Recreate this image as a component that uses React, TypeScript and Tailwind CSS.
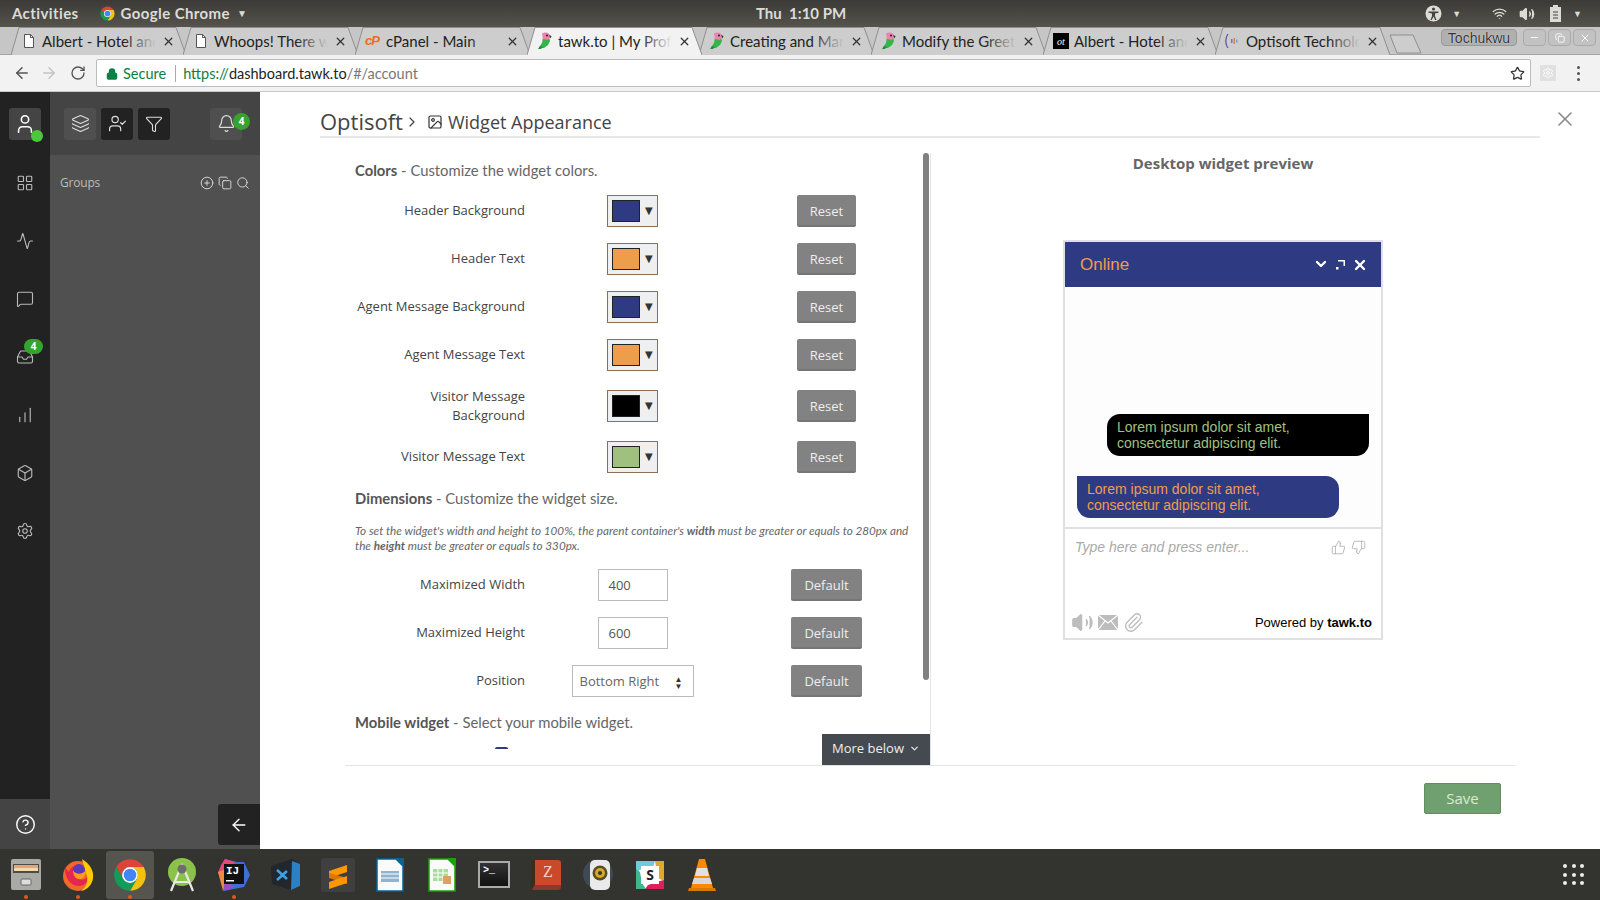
import {
  Activity,
  ArrowLeft,
  ArrowRight,
  Bell,
  Box,
  ChartNoAxesColumnIncreasing,
  ChevronDown,
  ChevronRight,
  CircleHelp,
  CirclePlus,
  Copy,
  Funnel,
  Image,
  Inbox,
  Layers,
  LayoutGrid,
  Lock,
  MessageSquare,
  Minus,
  Paperclip,
  RotateCw,
  Search,
  Settings,
  Star,
  ThumbsDown,
  ThumbsUp,
  User,
  UserCheck,
  Volume2,
  Wifi,
  X,
} from "lucide-react";

function ChromeLogo({ size }: { size: number }) {
  return (
    <svg width={size} height={size} viewBox="0 0 48 48">
      <path d="M24 4a20 20 0 0 1 17.32 10H24a10 10 0 0 0-8.66 15L6.68 14A20 20 0 0 1 24 4z" fill="#db4437" />
      <path d="M41.32 14A20 20 0 0 1 24 44l8.66-15A10 10 0 0 0 24 14z" fill="#f4c20d" />
      <path d="M6.68 14l8.66 15a10 10 0 0 0 17.32 0L24 44A20 20 0 0 1 6.68 14z" fill="#0f9d58" />
      <circle cx="24" cy="24" r="10" fill="#fff" />
      <circle cx="24" cy="24" r="8" fill="#4285f4" />
    </svg>
  );
}

function Parrot() {
  return (
    <svg width="16" height="18" viewBox="0 0 16 18">
      <path d="M6 5h6l1 4-2 4-4 3H2l1-2 2-3z" fill="#35b44a" />
      <path d="M5 1.500C7 0 11 0 12.500 2.500L14 6l-2 0-1 2-5-1z" fill="#f27fb2" />
      <circle cx="10" cy="3.500" r="1" fill="#222" />
      <path d="M3 14l-2 3h3l2-2z" fill="#1f8f3a" />
      <path d="M12 3l2.500 1-1 2.500z" fill="#333" />
    </svg>
  );
}

function PageIcon() {
  return (
    <svg width="16" height="16" viewBox="0 0 16 16" fill="#fff" stroke="#555">
      <path d="M3.500 1.500h6l3 3v10h-9z" />
      <path d="M9.500 1.500v3h3" fill="none" />
    </svg>
  );
}

function CpanelIcon() {
  return <span className="w-4 font-['Liberation_Sans',sans-serif] text-[13px] font-bold italic leading-4 tracking-[-1px] text-[#ee6c21]">cP</span>;
}

function AlbertIcon() {
  return <span className="flex h-4 w-4 items-center justify-center bg-black font-['Liberation_Serif',serif] text-[10px] italic text-white">ot</span>;
}

function OptisoftIcon() {
  return (
    <svg width="16" height="16" viewBox="0 0 16 16">
      <path d="M3 1C0 5 0 11 3 15" fill="none" stroke="#5b4ba8" strokeWidth="1.200" />
      <rect x="6" y="6" width="1.500" height="4" fill="#7d6bc0" />
      <rect x="8.500" y="5" width="1.500" height="6" fill="#d9824a" />
      <rect x="11" y="6.500" width="1.500" height="3" fill="#7da0c0" />
    </svg>
  );
}

const tabs = [
  { id: 1, title: "Albert - Hotel and", icon: <PageIcon /> },
  { id: 2, title: "Whoops! There was", icon: <PageIcon /> },
  { id: 3, title: "cPanel - Main", icon: <CpanelIcon /> },
  { id: 4, title: "tawk.to | My Profile", icon: <Parrot />, active: true },
  { id: 5, title: "Creating and Manag", icon: <Parrot /> },
  { id: 6, title: "Modify the Greeting", icon: <Parrot /> },
  { id: 7, title: "Albert - Hotel and", icon: <AlbertIcon /> },
  { id: 8, title: "Optisoft Technolog", icon: <OptisoftIcon /> },
];

function Tab({ title, icon, active }: { title: string; icon: React.ReactNode; active?: boolean }) {
  return (
    <div className={`relative -mr-[3px] flex h-[28px] w-[175px] shrink-0 items-center pl-[10px] ${active ? "z-10" : ""}`}>
      <svg className="absolute inset-0" width="175" height="28" viewBox="0 0 175 28">
        <path d="M0 28L8 .5H165L175 28" fill={active ? "#f2f2f2" : "#cdcdcd"} stroke="#8f8f8f" />
      </svg>
      <span className="relative flex w-4 justify-center">{icon}</span>
      <span className="relative ml-[5px] w-[114px] overflow-hidden whitespace-nowrap text-[15px] text-[#222]">
        {title}
        <span className={`absolute inset-y-0 right-0 w-8 bg-gradient-to-r from-transparent ${active ? "to-[#f2f2f2]" : "to-[#cdcdcd]"}`} />
      </span>
      <X className="relative ml-[6px] text-[#333]" size={13} strokeWidth={2.4} />
    </div>
  );
}

function TopBar() {
  return (
    <div className="relative flex h-[27px] items-center bg-gradient-to-b from-[#3b3a36] to-[#55534c] pl-3 pr-[18px] font-['Lato',sans-serif] text-[15px] font-bold text-[#dcdcd6]">
      <span className="tracking-[0.4px]">Activities</span>
      <span className="ml-[20px]">
        <ChromeLogo size={17} />
      </span>
      <span className="ml-[5px] tracking-[0.4px]">Google Chrome</span>
      <span className="ml-[7px] text-[10px]">▼</span>
      <span className="absolute left-[756px]">Thu&nbsp;&nbsp;1:10 PM</span>
      <div className="ml-auto flex items-center text-[#dcdcd6]">
        <svg width="17" height="17" viewBox="0 0 17 17">
          <circle cx="8.500" cy="8.500" r="8" fill="#dcdcd6" />
          <circle cx="8.500" cy="4" r="1.600" fill="#45443f" />
          <path d="M3.500 6.500h10v1.200l-3.500.8v2.500l1.500 4h-1.300l-1.700-3.500-1.700 3.500H5.500l1.500-4V8.500l-3.500-.8z" fill="#45443f" />
        </svg>
        <span className="ml-[10px] text-[9px]">▼</span>
        <Wifi size={15} className="ml-[31px]" />
        <Volume2 size={16} className="ml-[12px]" fill="#dcdcd6" />
        <svg className="ml-[14px]" width="14" height="17" viewBox="0 0 14 17">
          <path d="M4 0h5v2h3v15H1V2h3z" fill="#dcdcd6" />
          <path d="M4 7h5M4 10h5M4 13h5" stroke="#45443f" />
        </svg>
        <span className="ml-[10px] text-[9px]">▼</span>
      </div>
    </div>
  );
}

function WindowButton({ children }: { children: React.ReactNode }) {
  return <span className="flex h-[17px] w-[23px] items-center justify-center rounded-sm border border-[#aaa] bg-[#c2c2c2] text-white">{children}</span>;
}

function TabStrip() {
  return (
    <div className="flex h-[28px] items-start border-b border-[#a2a2a2] bg-[#c6c6c6] pl-[11px] font-['Lato',sans-serif]">
      {tabs.map((t) => (
        <Tab key={t.id} title={t.title} icon={t.icon} active={t.active} />
      ))}
      <svg className="mt-[7px] ml-[2px] shrink-0" width="34" height="20" viewBox="0 0 34 20">
        <path d="M1 1H24L32 19H8z" fill="#cdcdcd" stroke="#8f8f8f" />
      </svg>
      <div className="ml-auto mt-[2px] flex gap-[2px] pr-[4px]">
        <span className="mr-[4px] flex h-[17px] w-[76px] items-center justify-center rounded-sm border border-[#999] bg-[#b0b0b0] font-['Liberation_Sans',sans-serif] text-[14px] leading-none text-[#333] [text-shadow:0_0_1px_#fff]">
          Tochukwu
        </span>
        <WindowButton>
          <Minus size={11} strokeWidth={2} />
        </WindowButton>
        <WindowButton>
          <Copy size={10} strokeWidth={2} />
        </WindowButton>
        <WindowButton>
          <X size={12} strokeWidth={2} />
        </WindowButton>
      </div>
    </div>
  );
}

function Toolbar() {
  return (
    <div className="flex h-[37px] items-center border-b border-[#c8c8c8] bg-[#f2f2f2] pl-[13px] font-['Lato',sans-serif] text-[14.5px]">
      <ArrowLeft size={18} className="text-[#555]" />
      <ArrowRight size={18} className="ml-[9px] text-[#c4c4c4]" />
      <RotateCw size={16} className="ml-[12px] text-[#555]" />
      <div className="ml-[10px] flex h-[28px] w-[1435px] items-center rounded-[2px] border border-[#bcbcbc] bg-white pl-[9px] pr-[5px] pt-[1px]">
        <Lock size={12} strokeWidth={3} className="text-[#0b8043]" fill="#0b8043" />
        <span className="ml-[5px] text-[#0b8043]">Secure</span>
        <span className="ml-[9px] h-[17px] w-px bg-[#aaa]" />
        <span className="ml-[7px] text-[#0b8043]">https://</span>
        <span className="text-[#222]">dashboard.tawk.to</span>
        <span className="text-[#777]">/#/account</span>
        <Star size={15} className="ml-auto text-[#333]" />
      </div>
      <span className="ml-[9px] flex h-[16px] w-[16px] items-center justify-center bg-[#e0e0e0] text-[#fff]">
        <Settings size={12} />
      </span>
      <span className="ml-[21px] flex flex-col gap-[3px]">
        <span className="h-[3px] w-[3px] rounded-full bg-[#555]" />
        <span className="h-[3px] w-[3px] rounded-full bg-[#555]" />
        <span className="h-[3px] w-[3px] rounded-full bg-[#555]" />
      </span>
    </div>
  );
}

const railIcons = [LayoutGrid, Activity, MessageSquare, Inbox, ChartNoAxesColumnIncreasing, Box, Settings];

function Rail() {
  return (
    <div className="flex w-[50px] shrink-0 flex-col items-center bg-[#222] text-[#b9b9b9]">
      <div className="relative mt-[16px] flex h-8 w-8 items-center justify-center rounded-[3px] bg-[#444] text-white">
        <User size={22} strokeWidth={1.7} />
        <span className="absolute -bottom-[2px] -right-[2px] h-3 w-3 rounded-full bg-[#4cc83c]" />
      </div>
      <div className="mt-[14px] flex w-full flex-col">
        {railIcons.map((Icon, i) => (
          <div key={i} className="relative flex h-[58px] items-center justify-center">
            <Icon size={18} strokeWidth={1.5} />
            {i === 3 && (
              <span className="absolute left-[24px] top-[11px] flex h-[15px] w-[19px] items-center justify-center rounded-full bg-[#36a32e] text-[10px] font-bold text-white">
                4
              </span>
            )}
          </div>
        ))}
      </div>
      <div className="mt-auto flex h-[50px] w-full items-center justify-center bg-[#444] text-white">
        <CircleHelp size={21} strokeWidth={1.6} />
      </div>
    </div>
  );
}

function SidePanel() {
  return (
    <div className="flex w-[210px] shrink-0 flex-col bg-[#505050] text-[#ddd]">
      <div className="flex h-[63px] items-center bg-[#444] pl-[14px]">
        <span className="flex h-8 w-8 items-center justify-center rounded-[3px] bg-[#4f4f4f]">
          <Layers size={19} strokeWidth={1.4} />
        </span>
        <span className="ml-[5px] flex h-8 w-8 items-center justify-center rounded-[3px] bg-[#222]">
          <UserCheck size={19} strokeWidth={1.5} />
        </span>
        <span className="ml-[5px] flex h-8 w-8 items-center justify-center rounded-[3px] bg-[#222]">
          <Funnel size={18} strokeWidth={1.5} />
        </span>
        <span className="relative ml-[40px] flex h-8 w-8 items-center justify-center rounded-[3px] bg-[#4f4f4f]">
          <Bell size={19} strokeWidth={1.5} />
          <span className="absolute -right-[8px] top-[5px] flex h-[17px] w-[17px] items-center justify-center rounded-full bg-[#36a32e] text-[10px] font-bold text-white">
            4
          </span>
        </span>
      </div>
      <div className="mt-[19px] flex items-center pl-[10px] pr-[10px] text-[12px] tracking-[-0.2px] text-[#bbb]">
        <span>Groups</span>
        <span className="ml-auto flex items-center gap-[4px] text-[#e4e4e4]">
          <CirclePlus size={14} strokeWidth={1.5} />
          <Copy size={14} strokeWidth={1.5} />
          <Search size={14} strokeWidth={1.5} />
        </span>
      </div>
      <div className="mt-auto mb-[4px] ml-auto flex h-[41px] w-[42px] items-center justify-center rounded-l-[3px] bg-[#222] text-white">
        <ArrowLeft size={20} strokeWidth={1.6} />
      </div>
    </div>
  );
}

function Swatch({ color }: { color: string }) {
  return (
    <div className="flex h-8 w-[51px] items-center border border-[#8d6e56] bg-[#efefef] pl-[4px]">
      <span className={`h-[22px] w-[28px] border border-[#222] ${color}`} />
      <span className="ml-[5px] -mt-[2px] font-['DejaVu_Sans',sans-serif] text-[10px] text-[#333]">▼</span>
    </div>
  );
}

function FormButton({ label, wide }: { label: string; wide?: boolean }) {
  return (
    <button className={`h-8 rounded-[2px] border-b-2 border-[#767676] bg-[#828282] pt-[3px] text-[13px] text-[#eee] ${wide ? "w-[71px]" : "w-[59px]"}`}>
      {label}
    </button>
  );
}

function Row({ label, control, button, tall }: { label: React.ReactNode; control: React.ReactNode; button: React.ReactNode; tall?: boolean }) {
  return (
    <div className={`grid grid-cols-[170px_215px_173px] items-center justify-items-center ${tall ? "h-[38px]" : "h-8"}`}>
      <div className={`justify-self-end text-right text-[13px] leading-[19px] text-[#444] ${tall ? "" : "-mt-[2px]"}`}>{label}</div>
      {control}
      {button}
    </div>
  );
}

const colorRows = [
  { label: "Header Background", color: "bg-[#2e3a82]" },
  { label: "Header Text", color: "bg-[#ee9e4a]" },
  { label: "Agent Message Background", color: "bg-[#2e3a82]" },
  { label: "Agent Message Text", color: "bg-[#ee9e4a]" },
  { label: <>Visitor Message<br />Background</>, color: "bg-black", tall: true },
  { label: "Visitor Message Text", color: "bg-[#a0c080]" },
];

function Heading({ bold, rest }: { bold: string; rest: string }) {
  return (
    <h3 className="font-['Lato',sans-serif] text-[14.8px] leading-5 text-[#666]">
      <b className="text-[#555]">{bold}</b> - {rest}
    </h3>
  );
}

function SettingsPane() {
  return (
    <div className="relative mt-[15px] w-[586px] shrink-0 overflow-hidden border-r border-[#e4e4e4] pl-[10px]">
      <div className="pt-[7px]">
        <Heading bold="Colors" rest="Customize the widget colors." />
        <div className="mt-[15px] flex flex-col gap-4">
          {colorRows.map((r, i) => (
            <Row key={i} label={r.label} tall={r.tall} control={<Swatch color={r.color} />} button={<FormButton label="Reset" />} />
          ))}
        </div>
        <div className="mt-[15px]">
          <Heading bold="Dimensions" rest="Customize the widget size." />
        </div>
        <p className="mt-[15px] w-[560px] font-['Lato',sans-serif] text-[11.7px] italic leading-[15px] text-[#666]">
          To set the widget's width and height to 100%, the parent container's <b>width</b> must be greater or equals to 280px and the <b>height</b> must be greater or equals to 330px.
        </p>
        <div className="mt-[16px] flex flex-col gap-4">
          <Row
            label="Maximized Width"
            control={<span className="flex h-8 w-[70px] items-center border border-[#bbb] pl-[10px] pt-[1px] text-[13px] text-[#555]">400</span>}
            button={<FormButton label="Default" wide />}
          />
          <Row
            label="Maximized Height"
            control={<span className="flex h-8 w-[70px] items-center border border-[#bbb] pl-[10px] pt-[1px] text-[13px] text-[#555]">600</span>}
            button={<FormButton label="Default" wide />}
          />
          <Row
            label="Position"
            control={
              <span className="flex h-8 w-[122px] items-center justify-between border border-[#bbb] pl-[7px] pr-[10px] pt-[1px] text-[13px] text-[#666]">
                Bottom Right
                <span className="flex flex-col text-[8px] leading-[7px] text-[#333]">
                  <span>▲</span>
                  <span>▼</span>
                </span>
              </span>
            }
            button={<FormButton label="Default" wide />}
          />
        </div>
        <div className="mt-[15px]">
          <Heading bold="Mobile widget" rest="Select your mobile widget." />
        </div>
        <div className="ml-[140px] mt-[15px] h-[2px] w-[13px] rounded-t-full bg-[#2e3a82]" />
      </div>
      <div className="absolute right-[1px] top-0 h-[527px] w-[6px] rounded-[3px] bg-[#808080]" />
      <div className="absolute bottom-0 right-0 flex h-[31px] w-[108px] items-center justify-center gap-[5px] bg-[#454a50] pb-[2px] text-[13px] text-[#eee]">
        More below
        <ChevronDown size={11} strokeWidth={2.5} />
      </div>
    </div>
  );
}

function WidgetPreview() {
  return (
    <div className="flex-1 pt-[15px]">
      <h3 className="text-center text-[15px] font-bold leading-5 text-[#666]">Desktop widget preview</h3>
      <div className="mx-auto mt-[67px] flex h-[400px] w-[320px] flex-col border-2 border-[#e0e0e0] font-['Liberation_Sans',sans-serif]">
        <div className="flex h-[45px] items-center bg-[#2e3a82] pl-[15px] pr-[13px] text-[17px] text-[#ee9e4a]">
          Online
          <span className="ml-auto flex items-center text-white">
            <ChevronDown size={16} strokeWidth={3.5} className="-mt-[2px]" />
            <svg className="ml-[6px]" width="11" height="11" viewBox="0 0 11 11" fill="#fff">
              <path d="M3 1h7v6H8.500V2.500H3z" />
              <rect x="1" y="8" width="2.500" height="2.500" />
            </svg>
            <X size={16} strokeWidth={3.5} className="ml-[6px]" />
          </span>
        </div>
        <div className="flex h-[240px] flex-col justify-end gap-5 bg-[#fdfdfd] pb-[9px]">
          <div className="ml-[42px] h-[42px] w-[262px] rounded-[13px] rounded-tr-none bg-black px-[10px] py-[5px] text-[14px] leading-4 text-[#a0c080]">
            Lorem ipsum dolor sit amet, consectetur adipiscing elit.
          </div>
          <div className="ml-[12px] h-[42px] w-[262px] rounded-[13px] rounded-tl-none bg-[#2e3a82] px-[10px] py-[5px] text-[14px] leading-4 text-[#ee9e4a]">
            Lorem ipsum dolor sit amet, consectetur adipiscing elit.
          </div>
        </div>
        <div className="flex flex-1 flex-col border-t-2 border-[#e0e0e0] pb-[4px] pl-[6px] pr-[9px]">
          <div className="mt-[8px] flex items-center pl-[4px] pr-[6px] text-[14px] italic text-[#aaa]">
            Type here and press enter...
            <ThumbsUp size={15} strokeWidth={1.3} className="ml-auto" />
            <ThumbsDown size={15} strokeWidth={1.3} className="ml-[5px]" />
          </div>
          <div className="mt-auto flex items-center text-[13px] text-black">
            <Volume2 size={23} className="text-[#bdbdbd]" fill="#bdbdbd" strokeWidth={1.5} />
            <svg className="ml-[4px]" width="20" height="15" viewBox="0 0 20 15">
              <rect width="20" height="15" fill="#bdbdbd" />
              <path d="M0 0l10 8 10-8M0 15l7-9M20 15l-7-9" fill="none" stroke="#fff" strokeWidth="1.200" />
            </svg>
            <Paperclip size={21} className="ml-[5px] text-[#bdbdbd]" strokeWidth={1.5} />
            <span className="ml-auto">
              Powered by <b>tawk.to</b>
            </span>
          </div>
        </div>
      </div>
    </div>
  );
}

function MainPanel() {
  return (
    <div className="flex flex-1 flex-col bg-white">
      <div className="flex h-[46px] items-start pl-[60px]">
        <div className="flex h-[46px] w-[1220px] items-center border-b-2 border-[#e8e8e8] pt-[14px] text-[#444]">
          <span className="text-[22px]">Optisoft</span>
          <ChevronRight size={16} strokeWidth={1.8} className="ml-px mt-[2px]" />
          <Image size={16} strokeWidth={1.8} className="ml-[7px] mt-[2px] text-[#333]" />
          <span className="ml-[5px] mt-[2px] text-[18px]">Widget Appearance</span>
        </div>
        <X size={24} strokeWidth={1.6} className="ml-[13px] mt-[15px] text-[#888]" />
      </div>
      <div className="ml-[85px] flex h-[628px] w-[1170px] border-b border-[#e4e4e4]">
        <SettingsPane />
        <WidgetPreview />
      </div>
      <div className="flex justify-end pr-[99px] pt-[17px]">
        <button className="h-[31px] w-[77px] rounded-[2px] border border-[#5f8f5f] bg-[#70a070] text-[15px] text-[#d8ecd0]">Save</button>
      </div>
    </div>
  );
}

function FilesIcon() {
  return (
    <svg width="30" height="31" viewBox="0 0 30 31">
      <rect x="0" y="0" width="30" height="31" rx="2" fill="#a9a9a6" />
      <rect x="2" y="5" width="26" height="9" fill="#4e4b45" />
      <rect x="3" y="6" width="24" height="3" fill="#e9a37a" />
      <rect x="3" y="9" width="24" height="3" fill="#f3d8b0" />
      <rect x="10" y="20" width="10" height="6" rx="1" fill="#ddd" stroke="#666" />
    </svg>
  );
}

function FirefoxIcon() {
  return (
    <svg width="32" height="34" viewBox="0 0 32 34">
      <circle cx="16" cy="18" r="15" fill="#f2672a" />
      <path d="M20 1c8 5 12 12 11 19-1 7-6 12-12 13 6-4 8-11 5-18-1-5-3-9-4-14z" fill="#ffcb00" />
      <path d="M3 10c0 8 4 18 14 18 6 0 9-4 8-9-2 3-5 3-8 2-3-1-4-3-3-5 3 0 5-1 5-3-2-2-3-4-1-7-6 1-10 4-11 8-1-1-2-2-4-4z" fill="#e22850" />
      <circle cx="17" cy="12" r="6" fill="#5b3ab8" />
      <path d="M11 12c2 5 10 5 13 0 0 6-3 10-8 9-3-1-5-4-5-9z" fill="#ff9a1f" />
    </svg>
  );
}

function AndroidIcon() {
  return (
    <svg width="30" height="34" viewBox="0 0 30 34">
      <circle cx="15" cy="14" r="14" fill="#8bc34a" />
      <path d="M15 6L4 33M15 6l11 27M8 24h14" stroke="#e8e8e8" strokeWidth="2.200" fill="none" />
      <circle cx="15" cy="11" r="4.500" fill="#6d6d6d" />
    </svg>
  );
}

function IntellijIcon() {
  return (
    <div className="relative h-[34px] w-[32px]">
      <svg className="absolute inset-0" width="32" height="34" viewBox="0 0 32 34">
        <path d="M7 1l12 3 7 0 6 13-6 12-20 4-2-10-4-9z" fill="#3d6fd4" />
        <path d="M7 1l10 3-8 12-9 0 3-9z" fill="#e8467c" />
        <path d="M0 14l6-2 2 15-3 6z" fill="#f08a3c" />
        <path d="M5 33l2-10 10 6z" fill="#9b4fc5" />
        <rect x="6" y="6" width="20" height="20" fill="#111" />
        <rect x="8" y="22" width="8" height="1.500" fill="#fff" />
      </svg>
      <span className="absolute left-[8px] top-[7px] font-['Liberation_Mono',monospace] text-[11px] font-bold leading-3 text-white">IJ</span>
    </div>
  );
}

function VscodeIcon() {
  return (
    <svg width="30" height="32" viewBox="0 0 30 32">
      <path d="M0 7L21 0l8 5v22l-9 4L1 25z" fill="#22272e" />
      <path d="M21 2l8 3v22l-9 4z" fill="#2a80c4" />
      <path d="M6 11l10 9M6 21l10-9" stroke="#3ba4e8" strokeWidth="2.500" fill="none" />
    </svg>
  );
}

function SublimeIcon() {
  return (
    <svg width="34" height="34" viewBox="0 0 34 34">
      <rect width="34" height="34" rx="2" fill="#3f3f3f" />
      <path d="M8 13l18-6v7L8 20z" fill="#ff9800" />
      <path d="M8 15l18 5v6L8 20z" fill="#d97a00" />
      <path d="M8 24l18-6v7L8 31z" fill="#ff9800" />
    </svg>
  );
}

function DocIcon({ corner, edge, children }: { corner: string; edge: string; children: React.ReactNode }) {
  return (
    <svg width="28" height="34" viewBox="0 0 28 34">
      <path d="M1 1h19l7 7v25H1z" fill="#fafafa" stroke={edge} strokeWidth="1.500" />
      <path d="M19 0h9v9z" fill={corner} />
      {children}
    </svg>
  );
}

function TerminalIcon() {
  return (
    <div className="flex h-[27px] w-[32px] flex-col border-2 border-[#aaa] bg-gradient-to-b from-[#333] to-[#111] pl-[3px] pt-[3px] font-['Liberation_Mono',monospace] text-[10px] font-bold leading-[10px] text-white">
      {">_"}
    </div>
  );
}

function ZoteroIcon() {
  return (
    <div className="relative flex h-[30px] w-[30px] items-center justify-center rounded-[3px] border-b-[5px] border-l-4 border-b-[#8a3a28] border-l-[#3f2a20] bg-[#c9492a] font-['Liberation_Serif',serif] text-[16px] leading-none text-[#f3d5c8]">
      Z
    </div>
  );
}

function SpeakerIcon() {
  return (
    <svg width="30" height="32" viewBox="0 0 30 32">
      <circle cx="15" cy="15" r="15" fill="#3f4a55" />
      <rect x="7" y="1" width="20" height="30" rx="5" fill="#eaeaea" />
      <circle cx="17" cy="14" r="7.500" fill="#5b4d22" />
      <circle cx="17" cy="14" r="5" fill="#d6a92b" />
      <circle cx="17" cy="14" r="2" fill="#333" />
    </svg>
  );
}

function SlackIcon() {
  return (
    <div className="relative h-[28px] w-[28px] bg-white">
      <svg className="absolute inset-0" width="28" height="28" viewBox="0 0 28 28">
        <path d="M0 0h19l-2 6-14 3-3 14z" fill="#70cadb" />
        <path d="M19 0h9v20l-6-3z" fill="#e0a82e" />
        <path d="M28 19v9H9l3-4 12-4z" fill="#e01e5a" />
        <path d="M0 8l4 3 2 11 4 6H0z" fill="#3eb890" />
      </svg>
      <span className="absolute inset-[5px] flex items-center justify-center bg-white text-[14px] font-bold leading-none text-[#222]">S</span>
    </div>
  );
}

function VlcIcon() {
  return (
    <svg width="28" height="32" viewBox="0 0 28 32">
      <path d="M1 29h26l1 3H0z" fill="#d97a00" />
      <path d="M11 0h6l8 29H3z" fill="#ff8800" />
      <path d="M9 9h10l2 8H7z" fill="#e0e0e0" />
      <path d="M6 19l16 0 2 6H4z" fill="#d8d8d8" />
    </svg>
  );
}

const dockIcons = [
  { el: <FilesIcon />, running: true },
  { el: <FirefoxIcon />, running: true },
  { el: <ChromeLogo size={38} />, running: true, active: true },
  { el: <AndroidIcon /> },
  { el: <IntellijIcon />, running: true },
  { el: <VscodeIcon /> },
  { el: <SublimeIcon /> },
  {
    el: (
      <DocIcon corner="#06639b" edge="#06639b">
        <rect x="5" y="13" width="18" height="11" fill="#8fb4cf" />
        <path d="M5 16h18M5 20h18" stroke="#fff" />
      </DocIcon>
    ),
  },
  {
    el: (
      <DocIcon corner="#18a303" edge="#18a303">
        <rect x="5" y="11" width="15" height="12" fill="#a9dba0" />
        <path d="M5 15h15M5 19h15M10 11v12M15 11v12" stroke="#fff" />
        <rect x="15" y="18" width="8" height="8" fill="#e0a060" />
      </DocIcon>
    ),
  },
  { el: <TerminalIcon /> },
  { el: <ZoteroIcon /> },
  { el: <SpeakerIcon /> },
  { el: <SlackIcon /> },
  { el: <VlcIcon /> },
];

function Dock() {
  return (
    <div className="flex h-[51px] items-center bg-[#33332f]">
      {dockIcons.map((d, i) => (
        <div key={i} className={`relative mx-[2px] flex h-[48px] w-[48px] shrink-0 items-center justify-center rounded-[3px] ${d.active ? "bg-[#55544f]" : ""}`}>
          {d.el}
          {d.running && <span className="absolute bottom-0 left-[22px] h-[4px] w-[4px] rounded-full bg-[#e95420]" />}
        </div>
      ))}
      <div className="ml-auto mr-[16px] grid grid-cols-3 gap-[4.500px]">
        {Array.from({ length: 9 }).map((_, i) => (
          <span key={i} className="h-[4px] w-[4px] rounded-full bg-[#eee]" />
        ))}
      </div>
    </div>
  );
}

export default function App() {
  return (
    <div className="flex h-[900px] w-[1600px] flex-col overflow-hidden font-['Open_Sans',sans-serif]">
      <TopBar />
      <TabStrip />
      <Toolbar />
      <div className="flex h-[757px]">
        <Rail />
        <SidePanel />
        <MainPanel />
      </div>
      <Dock />
    </div>
  );
}
